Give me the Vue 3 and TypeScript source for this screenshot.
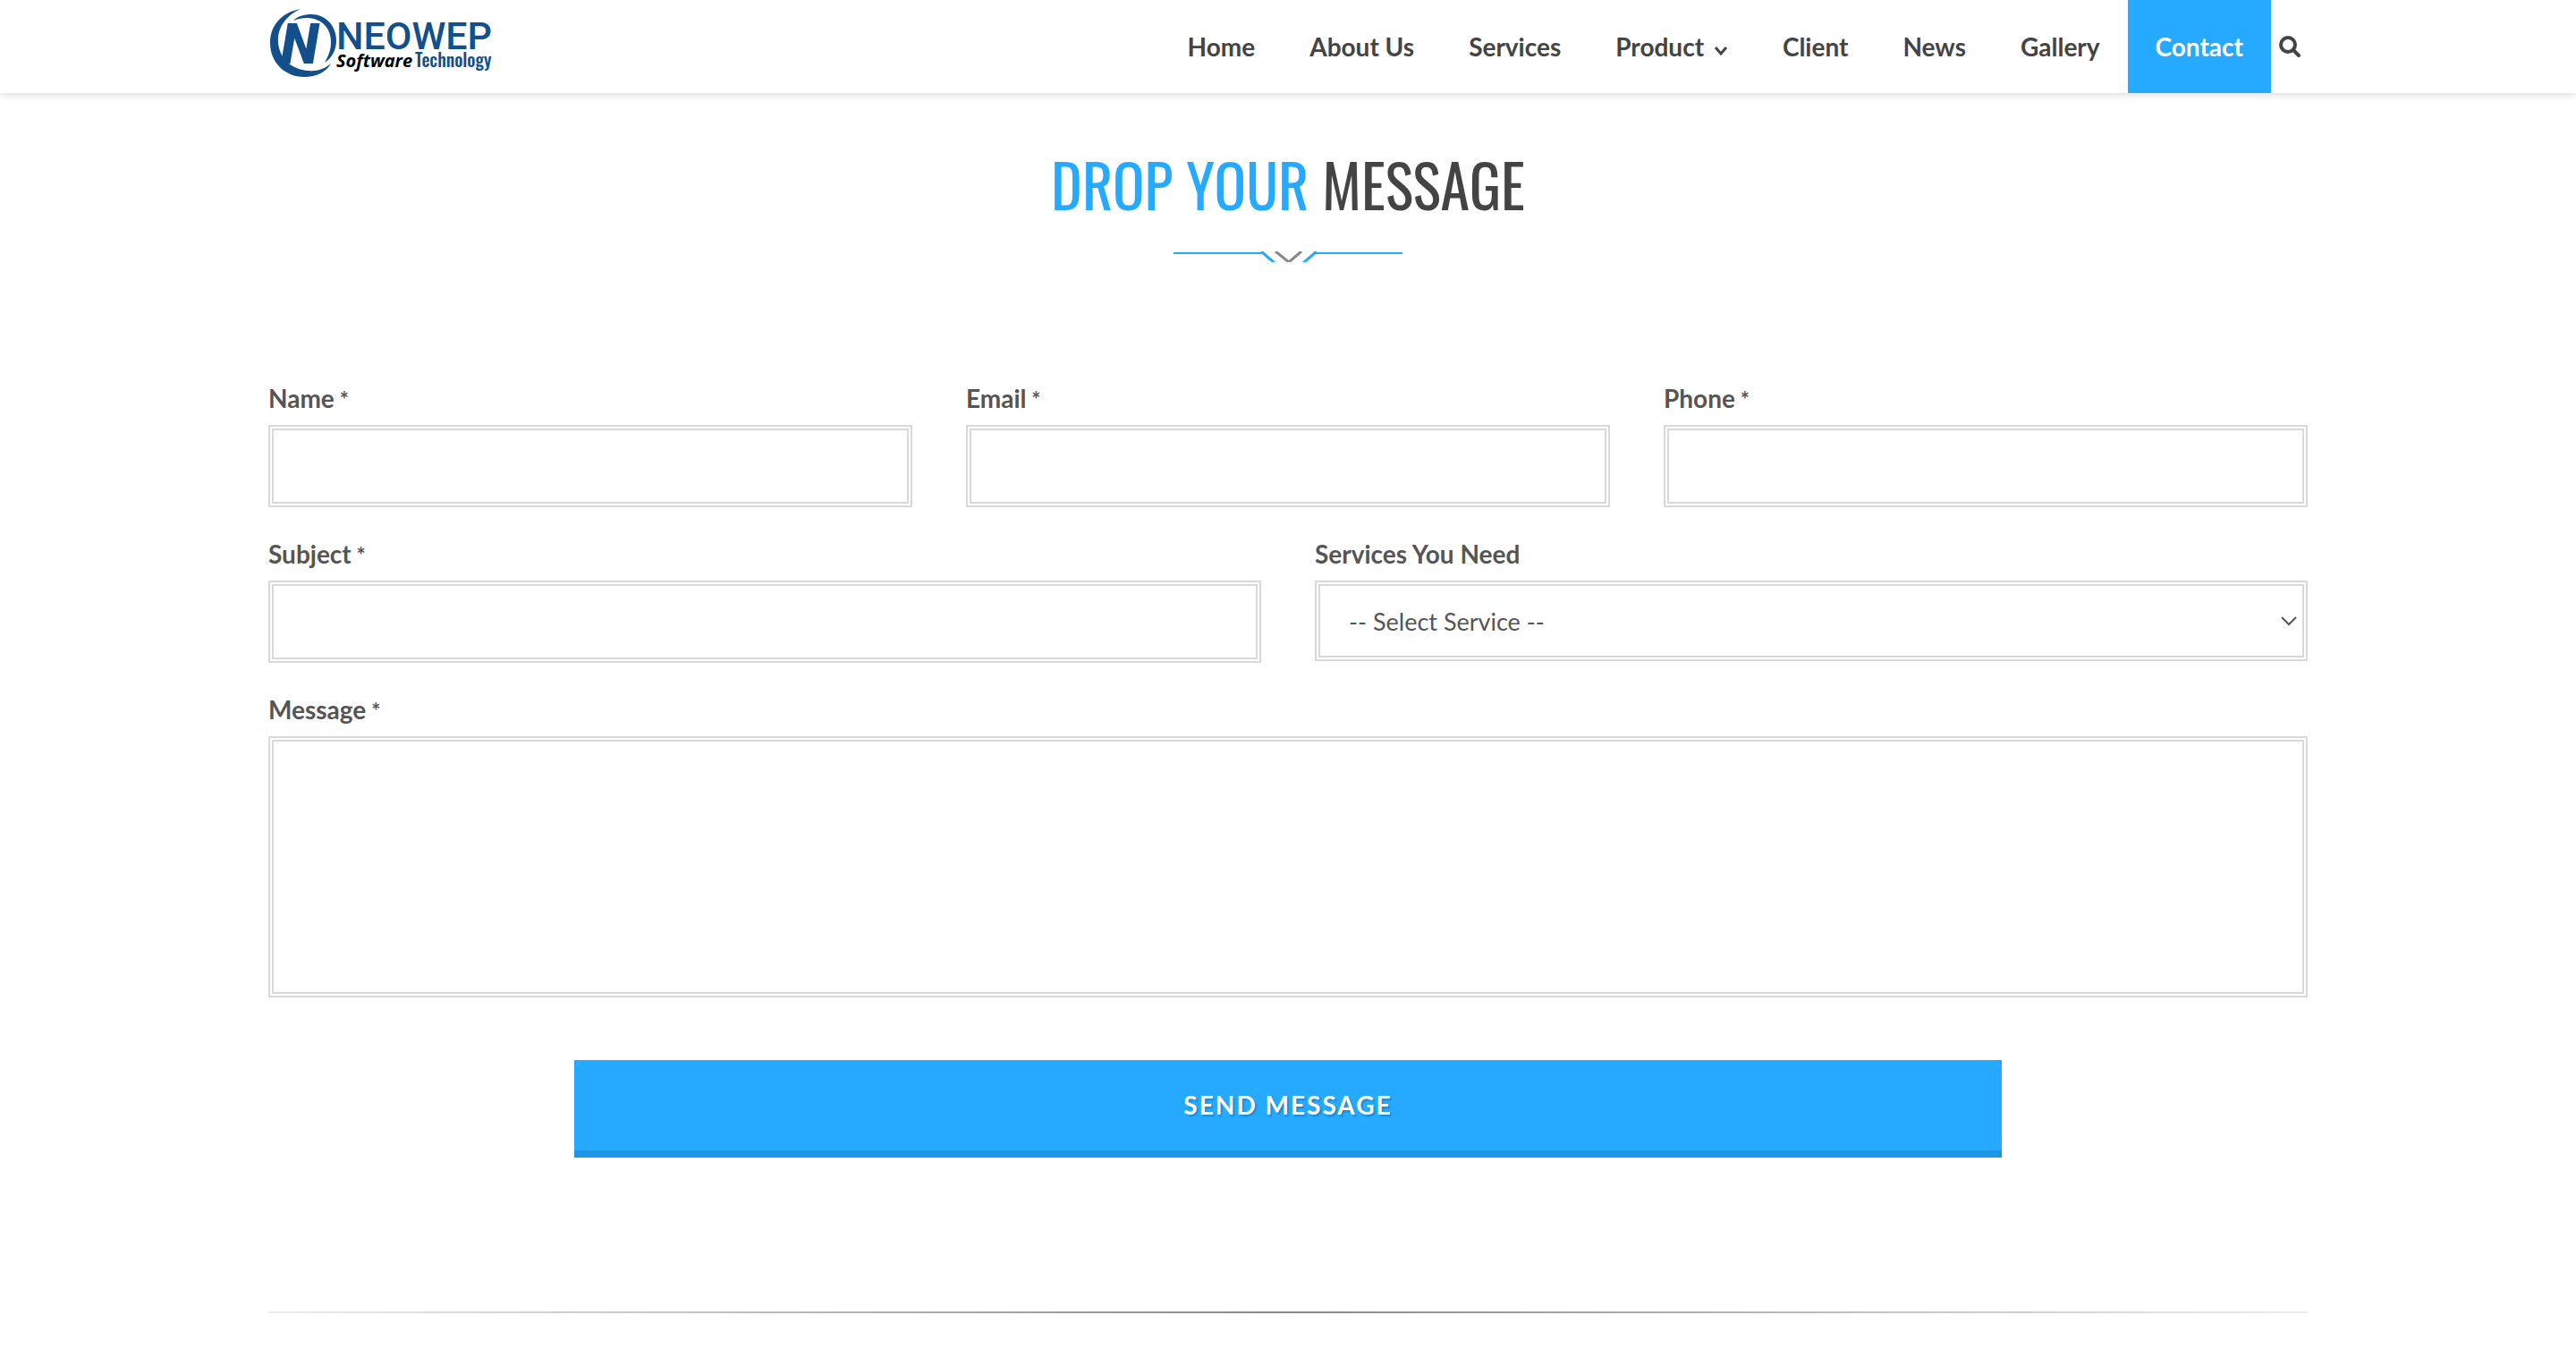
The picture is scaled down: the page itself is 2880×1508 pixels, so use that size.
<script setup lang="ts">
import { ref } from 'vue'

interface NavItem {
  label: string
  active?: boolean
  menu?: boolean
}

const navItems: NavItem[] = [
  { label: 'Home' },
  { label: 'About Us' },
  { label: 'Services' },
  { label: 'Product', menu: true },
  { label: 'Client' },
  { label: 'News' },
  { label: 'Gallery' },
  { label: 'Contact', active: true },
]

const contactFields = [
  { id: 'name', label: 'Name', type: 'text' },
  { id: 'email', label: 'Email', type: 'email' },
  { id: 'phone', label: 'Phone', type: 'tel' },
]

const service = ref('')
</script>

<template>
  <header class="header">
    <div class="container header-row">
      <a class="logo" href="#" aria-label="Neowep Software Technology">
        <svg width="260" height="104" viewBox="0 0 260 104">
          <g fill="#134f8b">
            <path d="M36 10C14 14 2 29 2 48c0 22 17 38 38 38 14 0 25-6 30-15-7 6-16 9-25 8-19-1-33-14-34-32C10 31 20 17 36 10z" />
            <path d="M28 23c5-5 12-7 20-7 16 0 28 13 28 29 0 11-5 20-13 25 4-7 7-14 7-23C70 31 60 21 44 20c-6 0-11 1-16 3z" />
            <text x="14" y="71" class="logo-mark">N</text>
            <text x="76" y="55" class="logo-name">NEOWEP</text>
            <text x="164" y="75" class="logo-tech">Technology</text>
          </g>
          <text x="76" y="75" class="logo-soft">Software</text>
        </svg>
      </a>
      <nav class="nav">
        <a v-for="item in navItems" :key="item.label" href="#" class="nav-link" :class="{ active: item.active }">
          {{ item.label }}
          <svg v-if="item.menu" class="caret" width="16" height="12" viewBox="0 0 16 12">
            <path d="M2 2l6 7 6-7" fill="none" stroke="currentColor" stroke-width="3" />
          </svg>
        </a>
        <button class="search" type="button" aria-label="Search">
          <svg width="24" height="24" viewBox="0 0 24 24" fill="none" stroke="currentColor">
            <circle cx="10" cy="10" r="8" stroke-width="4" />
            <path d="M16 16l6 6" stroke-width="4" stroke-linecap="round" />
          </svg>
        </button>
      </nav>
    </div>
  </header>

  <main class="container">
    <h1 class="title"><span>Drop Your</span> Message</h1>
    <svg class="ornament" width="256" height="12" viewBox="0 0 256 12" fill="none">
      <g stroke="#25aaff" stroke-width="2">
        <path d="M0 2h101M156 2h100" />
        <path d="M98 0l15 13M160 0l-15 13" stroke-width="3" />
      </g>
      <path d="M114 0l15 12 14-12" stroke="#888" stroke-width="3" />
    </svg>

    <form class="form" @submit.prevent>
      <div class="row">
        <div v-for="field in contactFields" :key="field.id" class="field">
          <label :for="field.id">{{ field.label }}<span> *</span></label>
          <input :id="field.id" :type="field.type" class="control" required />
        </div>
      </div>
      <div class="row">
        <div class="field">
          <label for="subject">Subject<span> *</span></label>
          <input id="subject" type="text" class="control" required />
        </div>
        <div class="field">
          <label for="service">Services You Need</label>
          <div class="select-wrap">
            <select id="service" v-model="service" class="control">
              <option value="">-- Select Service --</option>
            </select>
            <svg class="select-arrow" width="18" height="12" viewBox="0 0 18 12">
              <path d="M1 1l8 8 8-8" fill="none" stroke="#555" stroke-width="2" />
            </svg>
          </div>
        </div>
      </div>
      <div class="field">
        <label for="message">Message<span> *</span></label>
        <textarea id="message" class="control" required></textarea>
      </div>
      <button class="send" type="submit">Send Message</button>
    </form>
    <hr class="rule" />
  </main>
</template>

<style>
body {
  background: #fff;
}
</style>

<style scoped>
.header,
.container {
  font-family: Lato, sans-serif;
}

.container {
  box-sizing: border-box;
  max-width: 2340px;
  margin: 0 auto;
  padding: 0 30px;
}

.header {
  background: #fff;
  box-shadow: 0 0 10px rgba(0, 0, 0, 0.2);
}

.header-row {
  display: flex;
  justify-content: space-between;
}

.logo,
.logo svg {
  display: block;
}

.logo-mark {
  font: italic 900 62px Roboto, sans-serif;
}

.logo-name {
  font: 500 43px Roboto, sans-serif;
}

.logo-soft {
  font: italic 700 20px "Open Sans", sans-serif;
}

.logo-tech {
  font: 500 20px Oswald, sans-serif;
}

.nav {
  display: flex;
  gap: 1px;
}

.nav-link {
  padding: 0 30px;
  color: #444;
  font-size: 28px;
  font-weight: 700;
  line-height: 104px;
  text-decoration: none;
  white-space: nowrap;
}

.nav-link.active {
  padding: 0 31px;
  background: #25aaff;
  color: #fff;
}

.caret {
  margin-left: 4px;
}

.search {
  display: flex;
  align-items: center;
  padding: 0 8px;
  border: 0;
  background: none;
  color: #444;
}

.title {
  margin: 57px 0 0;
  color: #444;
  font-family: Oswald, sans-serif;
  font-size: 66px;
  font-weight: 400;
  line-height: 88px;
  text-align: center;
  text-transform: uppercase;
}

.title span {
  color: #25aaff;
}

.ornament {
  display: block;
  margin: 32px auto 0;
}

.form {
  display: flex;
  flex-direction: column;
  gap: 32px;
  margin-top: 132px;
}

.row {
  display: flex;
  gap: 60px;
}

.field {
  flex: 1;
  min-width: 0;
}

label {
  display: block;
  padding-bottom: 10px;
  color: #555;
  font-size: 28px;
  font-weight: 700;
  line-height: 40px;
}

label span {
  font-size: 24px;
  line-height: 1;
}

.control {
  display: block;
  box-sizing: border-box;
  width: 100%;
  height: 92px;
  padding: 0 32px;
  border: 6px double #d9d9d9;
  border-radius: 0;
  background: #fff;
  color: #555;
  font: 27px Lato, sans-serif;
}

select.control {
  height: 90px;
  appearance: none;
}

textarea.control {
  height: 292px;
  padding: 20px 32px;
  resize: none;
}

.select-wrap {
  position: relative;
}

.select-arrow {
  position: absolute;
  top: 40px;
  right: 12px;
  pointer-events: none;
}

.send {
  align-self: center;
  width: 70%;
  margin-top: 38px;
  padding: 0;
  border: 0;
  border-bottom: 8px solid #1f95e6;
  background: #25aaff;
  color: #fff;
  font: 700 28px/101px Lato, sans-serif;
  letter-spacing: 2px;
  text-shadow: 2px 2px 2px rgba(0, 0, 0, 0.2);
  text-transform: uppercase;
}

.rule {
  height: 2px;
  margin: 172px 0 40px;
  border: 0;
  background: linear-gradient(to right, #eee, #888, #eee);
}
</style>
